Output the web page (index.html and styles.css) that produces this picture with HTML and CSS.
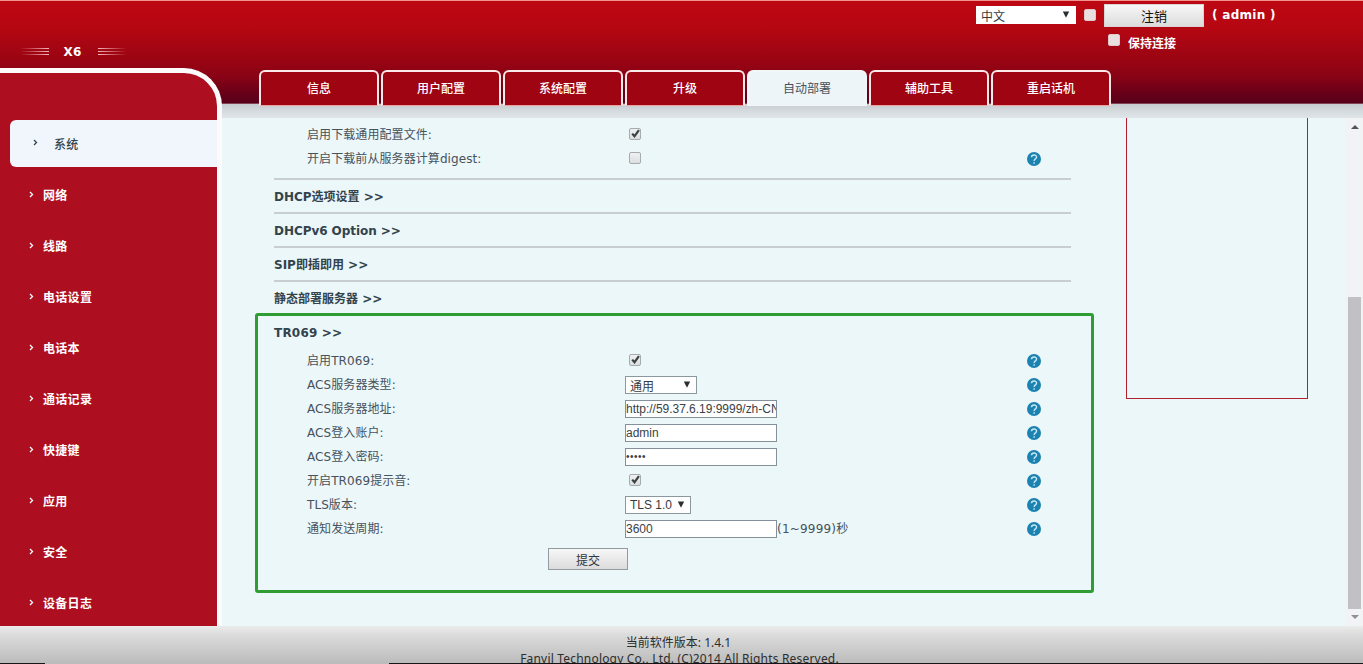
FILE: index.html
```html
<!DOCTYPE html>
<html lang="zh-CN">
<head>
<meta charset="utf-8">
<title>X6</title>
<link rel="stylesheet" href="styles.css">
</head>
<body>
<svg class="defs" aria-hidden="true">
  <symbol id="help" viewBox="0 0 14 14"><circle cx="7" cy="7" r="7" fill="#1c82b0"/><path d="M4.5 5.2C4.6 2.3 9.6 2.3 9.6 5.1C9.6 7 7.1 6.8 7.1 9" fill="none" stroke="#c4e8f5" stroke-width="1.4"/><rect x="6.4" y="10.2" width="1.4" height="1.5" fill="#c4e8f5"/></symbol>
  <symbol id="chev" viewBox="0 0 5 7"><path d="M1 1L3.5 3.5L1 6" fill="none" stroke="currentColor" stroke-width="1.3"/></symbol>
  <symbol id="down" viewBox="0 0 8 7"><path d="M0.8 0.5H7.2L4 6.8Z" fill="currentColor"/></symbol>
  <symbol id="tick" viewBox="0 0 11 11"><path d="M2.2 5.6L4.5 8.3L8.9 2.2" fill="none" stroke="#3b3f42" stroke-width="2.2"/></symbol>
</svg>
<div class="page">
  <div class="left">
    <div class="brand"><i class="bars fade-left"></i><b>X6</b><i class="bars fade-right"></i></div>
    <nav class="side">
      <a class="item active"><svg><use href="#chev"/></svg><span>系统</span></a>
      <a class="item"><svg><use href="#chev"/></svg><span>网络</span></a>
      <a class="item"><svg><use href="#chev"/></svg><span>线路</span></a>
      <a class="item"><svg><use href="#chev"/></svg><span>电话设置</span></a>
      <a class="item"><svg><use href="#chev"/></svg><span>电话本</span></a>
      <a class="item"><svg><use href="#chev"/></svg><span>通话记录</span></a>
      <a class="item"><svg><use href="#chev"/></svg><span>快捷键</span></a>
      <a class="item"><svg><use href="#chev"/></svg><span>应用</span></a>
      <a class="item"><svg><use href="#chev"/></svg><span>安全</span></a>
      <a class="item"><svg><use href="#chev"/></svg><span>设备日志</span></a>
    </nav>
  </div>
  <div class="right">
    <header class="top">
      <div class="session">
        <span class="select lang">中文<svg><use href="#down"/></svg></span>
        <span class="check plain"></span>
        <button class="btn logout">注销</button>
        <b class="user">( admin )</b>
      </div>
      <div class="keep"><span class="check plain"></span><b>保持连接</b></div>
    </header>
    <nav class="tabs">
      <a class="tab">信息</a><a class="tab">用户配置</a><a class="tab">系统配置</a><a class="tab">升级</a><a class="tab current">自动部署</a><a class="tab">辅助工具</a><a class="tab">重启话机</a>
    </nav>
    <div class="body">
      <main class="main">
        <div class="rows first">
          <div class="row"><label>启用下载通用配置文件:</label><div class="field"><span class="check"><svg><use href="#tick"/></svg></span></div></div>
          <div class="row"><label>开启下载前从服务器计算digest:</label><div class="field"><span class="check"></span></div><svg class="help"><use href="#help"/></svg></div>
        </div>
        <h3>DHCP选项设置 &gt;&gt;</h3>
        <h3 class="latin">DHCPv6 Option &gt;&gt;</h3>
        <h3>SIP即插即用 &gt;&gt;</h3>
        <h3>静态部署服务器 &gt;&gt;</h3>
        <section class="tr">
          <h3>TR069 &gt;&gt;</h3>
          <div class="rows">
            <div class="row"><label>启用TR069:</label><div class="field"><span class="check"><svg><use href="#tick"/></svg></span></div><svg class="help"><use href="#help"/></svg></div>
            <div class="row"><label>ACS服务器类型:</label><div class="field"><span class="select type">通用<svg><use href="#down"/></svg></span></div><svg class="help"><use href="#help"/></svg></div>
            <div class="row"><label>ACS服务器地址:</label><div class="field"><span class="input url">http://59.37.6.19:9999/zh-CN</span></div><svg class="help"><use href="#help"/></svg></div>
            <div class="row"><label>ACS登入账户:</label><div class="field"><span class="input">admin</span></div><svg class="help"><use href="#help"/></svg></div>
            <div class="row"><label>ACS登入密码:</label><div class="field"><span class="input secret">•••••</span></div><svg class="help"><use href="#help"/></svg></div>
            <div class="row"><label>开启TR069提示音:</label><div class="field"><span class="check"><svg><use href="#tick"/></svg></span></div><svg class="help"><use href="#help"/></svg></div>
            <div class="row"><label>TLS版本:</label><div class="field"><span class="select tls">TLS 1.0<svg><use href="#down"/></svg></span></div><svg class="help"><use href="#help"/></svg></div>
            <div class="row"><label>通知发送周期:</label><div class="field"><span class="input">3600</span><span class="unit">(1~9999)秒</span></div><svg class="help"><use href="#help"/></svg></div>
          </div>
          <button class="btn submit">提交</button>
        </section>
      </main>
      <aside class="note"></aside>
      <div class="scroll"><i class="up"></i><i class="thumb"></i><i class="dn"></i></div>
    </div>
  </div>
  <footer class="foot"><p class="version">当前软件版本: 1.4.1</p><p class="copy">Fanvil Technology Co., Ltd. (C)2014 All Rights Reserved.</p></footer>
</div>
</body>
</html>
```
FILE: styles.css
```css
* { box-sizing: border-box; }
body { margin: 0; font: 12px/16px "DejaVu Sans", "Noto Sans CJK SC", sans-serif; color: #46525c; }
.defs { position: absolute; width: 0; height: 0; }
.page {
  width: 1363px; height: 664px; overflow: hidden;
  display: grid; grid-template: 626px 38px / 222px 1fr;
  background:
    linear-gradient(#f0948f, #f0948f) 0 0 / 100% 1px no-repeat,
    linear-gradient(#bd0812 0, #b60712 26px, #980413 62px, #860315 78px, #660018 94px, #58001a 103px, #ab8690 104px) 0 0 / 100% 104px no-repeat,
    linear-gradient(#c6cccf, #d6dcdf 8px, #dfe5e8 14px) 0 104px / 100% 14px no-repeat,
    #ecf7f9;
}

.brand { height: 68px; padding: 46px 0 0 20px; display: flex; align-items: flex-start; color: #fff; line-height: 12px; }
.brand b { width: 49px; padding-right: 2px; text-align: center; letter-spacing: .3px; }
.bars { width: 29px; height: 8px; margin-top: 2px; background: repeating-linear-gradient(#f3b9bb 0 1px, transparent 1px 3px); }
.fade-left { mask-image: linear-gradient(90deg, transparent, #000); }
.fade-right { mask-image: linear-gradient(270deg, transparent, #000); }
.side { height: 558px; padding-top: 47px; background: #ae0f20; border: solid #fcfafb; border-width: 5px 5px 0 0; border-top-right-radius: 38px; }
.item { display: flex; align-items: center; height: 51px; padding: 0 0 0 29px; gap: 9px; color: #fff; font-weight: bold; letter-spacing: .3px; }
.item span { padding-top: 2px; }
.item svg { width: 5px; height: 7px; }
.item.active { height: 47px; margin: 0 0 2px 10px; padding-left: 23px; gap: 16px; background: #f0f6fc; color: #33434c; border-radius: 6px 0 0 6px; font-weight: 500; }
.item.active svg { margin-top: -2px; }

.top { height: 70px; padding: 4px 0 0 754px; }
.session { display: flex; height: 23px; align-items: center; }
.keep { display: flex; align-items: flex-start; padding: 7px 0 0 132px; color: #fff; }
.keep b { margin: 2px 0 0 8px; }
.user { color: #fff; margin: -2px 0 0 8px; letter-spacing: .3px; white-space: nowrap; }
.select { display: flex; align-items: center; justify-content: space-between; height: 18px; padding: 0 5px 0 4px; border: 1px solid #8c989f; background: #fff; color: #343b40; font: 12px "Liberation Sans", "Noto Sans CJK SC", sans-serif; }
.select svg { width: 8px; height: 7px; margin-top: -2px; color: #283034; }
.lang { width: 100px; border-color: #fff; margin-top: -1px; }
.type { width: 72px; }
.tls { width: 66px; }
.check { display: block; width: 12px; height: 12px; border: 1px solid #a5abae; border-radius: 2px; background: linear-gradient(#eef0f1, #dcdfe0); }
.check svg { display: block; width: 11px; height: 11px; margin: -1px 0 0; }
.check.plain { border-color: #ddc9ca; background: #e9dfe1; }
.session .check { margin: -2px 8px 0; }
.btn { padding: 0; border: 1px solid #949b9f; background: linear-gradient(#f7f7f7, #dcdcdc); color: #30363a; font: 12px "Liberation Sans", "Noto Sans CJK SC", sans-serif; }
.logout { width: 100px; height: 23px; border-color: #d8d4d4; color: #111; font-size: 13px; }

.tabs { display: flex; gap: 2px; height: 36px; padding-left: 37px; }
.tab { width: 120px; height: 36px; padding-top: 9px; border: 2px solid #fbe9ea; border-bottom: 1px solid #eaa19f; border-radius: 6px 6px 0 0; background: #9f0413; color: #fff; text-align: center; font-weight: 500; }
.tab.current { background: #edf5f8; border-color: #f1f6f8; color: #46525c; font-weight: 400; }

.body { display: flex; height: 508px; margin-top: 12px; padding: 0 0 0 33px; }
.main { width: 839px; }
.rows { padding-left: 52px; }
.first { padding-top: 5px; height: 60px; }
.row { display: flex; align-items: center; height: 24px; }
.row label { width: 318px; white-space: nowrap; letter-spacing: .08px; }
.field { display: flex; align-items: center; width: 402px; }
.field .check { margin: -2px 0 0 4px; }
.help { width: 14px; height: 14px; }
h3 { height: 34px; width: 797px; margin: 0 0 0 19px; padding-top: 9px; border-top: 2px solid #c8cdd2; font-size: 12px; line-height: 16px; color: #33434c; }
h3.latin { letter-spacing: -.05px; }
.tr { height: 280px; margin-top: -1px; border: 3px solid #309c34; border-radius: 3px; }
.tr h3 { height: 33px; margin-left: 16px; padding-top: 9px; border: 0; letter-spacing: .2px; }
.tr .rows { padding-left: 49px; }
.input { width: 152px; height: 18px; padding: 0 1px 0 0; overflow: hidden; border: 1px solid #84919b; background: #fff; color: #3a4146; font: 12px/16px "Liberation Sans", sans-serif; white-space: nowrap; }
.url { letter-spacing: -.02px; padding: 0; }
.secret { font-size: 10px; letter-spacing: .5px; }
.unit { letter-spacing: .2px; white-space: nowrap; }
.submit { display: block; width: 80px; height: 22px; margin: 7px 0 0 290px; }
.note { width: 182px; height: 281px; margin-left: 32px; border: solid #b1202d; border-width: 0 1px 1px; }
.scroll { width: 17px; margin-left: auto; padding: 7px 0 0 2px; background: #f1f3f4; }
.scroll i { display: block; width: 13px; }
.scroll .up { height: 4px; width: 8px; margin-left: 3px; background: #50555a; clip-path: polygon(50% 0, 100% 100%, 0 100%); }
.scroll .thumb { height: 312px; margin-top: 168px; background: #c1c0c2; }
.scroll .dn { height: 4px; width: 8px; margin: 6px 0 0 3px; background: #8d9194; clip-path: polygon(0 0, 100% 0, 50% 100%); }

.foot { grid-column: 1 / 3; height: 38px; overflow: hidden; padding: 9px 6px 0 0; text-align: center; color: #2d2d2d; font-family: "Noto Sans", "Noto Sans CJK SC", sans-serif;
  background: linear-gradient(90deg, #161616 45px, transparent 45px 389px, #161616 389px) 0 100% / 100% 1px no-repeat, linear-gradient(#ebebeb, #dadada 10px, #bcbcbc 37px); }
.foot p { margin: 0; line-height: 16px; height: 16px; }
.foot .copy { height: 12px; overflow: hidden; padding-left: 2px; letter-spacing: .19px; }
```
